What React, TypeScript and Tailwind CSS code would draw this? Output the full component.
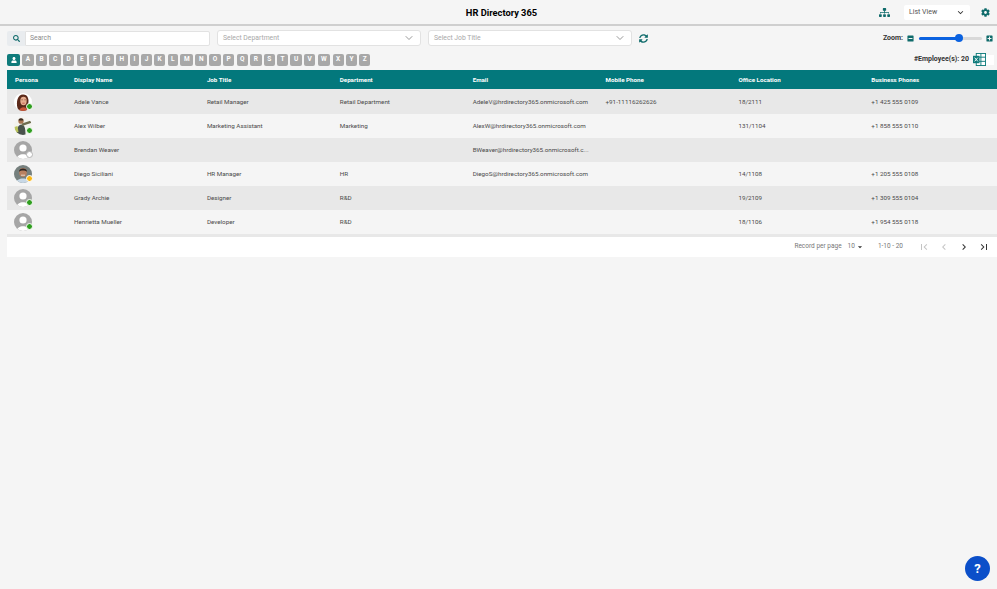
import { ChevronDown } from "lucide-react"
import { FaCog, FaMinusSquare, FaPlusSquare, FaSearch, FaSitemap, FaSyncAlt, FaUser } from "react-icons/fa"
import { MdChevronLeft, MdChevronRight, MdFirstPage, MdLastPage, MdKeyboardArrowDown, MdArrowDropDown } from "react-icons/md"

interface Person {
  name: string
  title: string
  dept: string
  email: string
  mobile: string
  office: string
  phone: string
  photo: "adele" | "alex" | "diego" | "none"
  status: "green" | "yellow" | "off"
}

const people: Person[] = [
  { name: "Adele Vance", title: "Retail Manager", dept: "Retail Department", email: "AdeleV@hrdirectory365.onmicrosoft.com", mobile: "+91-11116262626", office: "18/2111", phone: "+1 425 555 0109", photo: "adele", status: "green" },
  { name: "Alex Wilber", title: "Marketing Assistant", dept: "Marketing", email: "AlexW@hrdirectory365.onmicrosoft.com", mobile: "", office: "131/1104", phone: "+1 858 555 0110", photo: "alex", status: "green" },
  { name: "Brendan Weaver", title: "", dept: "", email: "BWeaver@hrdirectory365.onmicrosoft.c...", mobile: "", office: "", phone: "", photo: "none", status: "off" },
  { name: "Diego Siciliani", title: "HR Manager", dept: "HR", email: "DiegoS@hrdirectory365.onmicrosoft.com", mobile: "", office: "14/1108", phone: "+1 205 555 0108", photo: "diego", status: "yellow" },
  { name: "Grady Archie", title: "Designer", dept: "R&D", email: "", mobile: "", office: "19/2109", phone: "+1 309 555 0104", photo: "none", status: "green" },
  { name: "Henrietta Mueller", title: "Developer", dept: "R&D", email: "", mobile: "", office: "18/1106", phone: "+1 954 555 0118", photo: "none", status: "green" },
]

const columns = ["Persona", "Display Name", "Job Title", "Department", "Email", "Mobile Phone", "Office Location", "Business Phones"]
const letters = "ABCDEFGHIJKLMNOPQRSTUVWXYZ".split("")

function Photo({ kind }: { kind: Person["photo"] }) {
  if (kind === "adele") {
    return (
      <svg viewBox="0 0 18 18" className="w-[18px] h-[18px] rounded-full">
        <rect width="18" height="18" fill="#fff" />
        <path d="M3.500 15C2 9 3.500 1.500 9 1.500c5 0 6.500 5 5 10l-1.500 6.500H5z" fill="#5c2a1a" />
        <ellipse cx="9.500" cy="8" rx="3.200" ry="4.200" fill="#e6ad8f" />
        <path d="M7.500 6.800h1.200M10.500 6.800h1.200" stroke="#4a2418" strokeWidth="0.600" />
        <path d="M8.300 10.200h2.400" stroke="#b8403a" strokeWidth="0.700" />
        <path d="M5 18c1-5 8-5 9 0z" fill="#c9583a" />
      </svg>
    )
  }
  if (kind === "alex") {
    return (
      <svg viewBox="0 0 18 18" className="w-[18px] h-[18px] rounded-full">
        <rect width="18" height="18" fill="#f3f3ee" />
        <circle cx="7" cy="4.200" r="2.600" fill="#a87452" />
        <path d="M4.500 3.500c0-3 5-3 5 0z" fill="#3d2c20" />
        <path d="M2.500 18c0-7 2-10.500 5-10.500s4 3.500 4 10.500z" fill="#49524c" />
        <path d="M8 6.500l9-3v2.500l-9 3z" fill="#6f6d50" />
        <path d="M0.500 10l3-1 1 6-3 1z" fill="#b8c25a" />
      </svg>
    )
  }
  if (kind === "diego") {
    return (
      <svg viewBox="0 0 18 18" className="w-[18px] h-[18px] rounded-full">
        <rect width="18" height="18" fill="#76807e" />
        <ellipse cx="9" cy="7.500" rx="3.800" ry="4.400" fill="#b9805f" />
        <path d="M5 6.800C5 2.500 13 2.500 13 6.800 11 5 7 5 5 6.800z" fill="#2e2622" />
        <path d="M7 10.200h4" stroke="#f2ede6" strokeWidth="0.800" />
        <path d="M1.500 18c1-6 14-6 15 0z" fill="#c8d8e6" />
      </svg>
    )
  }
  return (
    <svg viewBox="0 0 18 18" className="w-[18px] h-[18px] rounded-full">
      <rect width="18" height="18" fill="#a6a6a6" />
      <circle cx="9" cy="7" r="3.600" fill="#fff" />
      <path d="M2.500 18C3 11.500 15 11.500 15.500 18z" fill="#fff" />
    </svg>
  )
}

function Avatar({ person }: { person: Person }) {
  const dot =
    person.status === "green"
      ? "bg-[#2f9e1f] border-white"
      : person.status === "yellow"
        ? "bg-[#fbb714] border-white"
        : "bg-white border-[#b5b5b5]"
  return (
    <div className="relative w-[18px] h-[18px]">
      <Photo kind={person.photo} />
      <span className={`absolute -right-[1px] bottom-[1px] w-[7px] h-[7px] rounded-full border ${dot}`} />
    </div>
  )
}

function ExcelIcon() {
  return (
    <svg viewBox="0 0 14 14" className="w-[13px] h-[13px]">
      <rect x="3.500" y="0.500" width="10" height="13" fill="#fff" stroke="#0f7b7b" />
      <path d="M3.500 4.500h10M3.500 9h10M8.500 0.500v13" stroke="#0f7b7b" fill="none" />
      <rect x="0" y="3" width="7" height="8" fill="#0f7b7b" />
      <path d="M1.800 5l3.400 4M5.200 5L1.800 9" stroke="#fff" strokeWidth="1" />
    </svg>
  )
}

function Cell({ children }: { children: string }) {
  return <div className="pt-[1px]">{children}</div>
}

export default function App() {
  return (
    <div className="w-[997px] h-[589px] bg-[#f5f5f5] overflow-hidden relative text-[#4a4a4a] font-['Roboto','Liberation_Sans',sans-serif]">
      {/* title bar */}
      <header className="h-[26px] border-b-2 border-[#cfcfcf] flex items-center relative">
        <h1 className="flex-1 text-center text-[9.300px] font-bold text-black pl-[6px] pt-[1px]">HR Directory 365</h1>
        <div className="absolute right-[7px] top-[5px] flex items-center">
          <FaSitemap className="text-[#0f6b6b] text-[11px] mr-[14px]" />
          <div className="w-[66px] h-[15px] bg-white rounded-[2px] flex items-center justify-between pl-[5px] pr-[4px] text-[7px] text-[#555] mr-[11px]">
            <span>List View</span>
            <MdKeyboardArrowDown className="text-[11px] text-[#333]" />
          </div>
          <FaCog className="text-[#0f6b6b] text-[9px]" />
        </div>
      </header>

      {/* filters */}
      <div className="flex items-center h-[16px] mt-[4px] pl-[7px] pr-[4px]">
        <div className="w-[18px] h-[15px] bg-[#e9ecef] rounded-l-[2px] flex items-center justify-center">
          <FaSearch className="text-[#0f6b6b] text-[7px]" />
        </div>
        <div className="w-[185px] h-[15px] bg-white border border-[#e2e2e2] rounded-r-[2px] flex items-center pl-[4px] text-[6.800px] text-[#8a8a8a]">Search</div>
        <div className="ml-[7px] w-[204px] h-[16px] bg-white border border-[#e2e2e2] rounded-[3px] flex items-center justify-between pl-[5px] pr-[5px] text-[6.800px] text-[#a8a8a8]">
          <span>Select Department</span>
          <ChevronDown size={12} strokeWidth={1.500} className="text-[#777]" />
        </div>
        <div className="ml-[7px] w-[204px] h-[16px] bg-white border border-[#e2e2e2] rounded-[3px] flex items-center justify-between pl-[5px] pr-[5px] text-[6.800px] text-[#a8a8a8]">
          <span>Select Job Title</span>
          <ChevronDown size={12} strokeWidth={1.500} className="text-[#777]" />
        </div>
        <FaSyncAlt className="ml-[7px] text-[#0f6b6b] text-[9px]" />
        <div className="ml-auto flex items-center">
          <span className="text-[7px] font-bold text-[#333] mr-[4px]">Zoom:</span>
          <FaMinusSquare className="text-[#0f6b6b] text-[7px]" />
          <div className="relative w-[63px] h-[3px] rounded-full bg-[#d9d9d9] ml-[5px] mr-[4px]">
            <div className="w-[40px] h-[3px] rounded-full bg-[#0b62e0]" />
            <span className="absolute left-[36px] -top-[2.500px] w-[8px] h-[8px] rounded-full bg-[#0b62e0]" />
          </div>
          <FaPlusSquare className="text-[#0f6b6b] text-[7px]" />
        </div>
      </div>

      {/* alphabet */}
      <div className="flex items-center mt-[7px] pl-[7px] pr-[3px] h-[13px]">
        <div className="flex gap-[2.300px]">
          <div className="w-[13px] h-[12px] rounded-[2px] bg-[#0f7b7b] flex items-center justify-center">
            <FaUser className="text-white text-[6px]" />
          </div>
          {letters.map((l) => (
            <div key={l} className="px-[3.500px] h-[12px] rounded-[2px] bg-[#a8a8a8] flex items-center justify-center text-[6.500px] font-bold text-white">
              {l}
            </div>
          ))}
        </div>
        <div className="ml-auto flex items-center">
          <span className="text-[7px] font-bold text-[#333] mr-[4px]">#Employee(s): 20</span>
          <ExcelIcon />
          <span className="w-[8px] h-[10px] bg-white" />
        </div>
      </div>

      {/* table */}
      <div className="ml-[7px] mt-[4px]">
        <div className="grid grid-cols-[67px_repeat(6,132.900px)_1fr] h-[20px] items-center bg-[#03787c] border-b border-[#e8e8e8] text-white text-[6.200px] font-bold">
          {columns.map((c, i) => (
            <div key={c} className={i === 0 ? "pl-[8px] pt-[3px]" : "pt-[3px]"}>{c}</div>
          ))}
        </div>
        {people.map((p, idx) => (
          <div key={p.name} className={`grid grid-cols-[67px_repeat(6,132.900px)_1fr] h-[24px] items-center text-[6.250px] ${idx % 2 === 0 ? "bg-[#e8e8e8]" : "bg-[#f5f5f5]"}`}>
            <div className="pl-[7px]"><Avatar person={p} /></div>
            <Cell>{p.name}</Cell>
            <Cell>{p.title}</Cell>
            <Cell>{p.dept}</Cell>
            <Cell>{p.email}</Cell>
            <Cell>{p.mobile}</Cell>
            <Cell>{p.office}</Cell>
            <Cell>{p.phone}</Cell>
          </div>
        ))}
        <div className="h-[3px] bg-[#e8e8e8]" />
        <div className="h-[20px] bg-white flex items-center justify-end text-[6.500px] text-[#777] pr-[7px]">
          <span>Record per page</span>
          <span className="ml-[6px]">10</span>
          <MdArrowDropDown className="text-[10px] text-[#333]" />
          <span className="ml-[13px] mr-[15px]">1-10 - 20</span>
          <MdFirstPage className="text-[12px] text-[#c4c4c4] mr-[8px]" />
          <MdChevronLeft className="text-[12px] text-[#c4c4c4] mr-[8px]" />
          <MdChevronRight className="text-[12px] text-[#333] mr-[8px]" />
          <MdLastPage className="text-[12px] text-[#333]" />
        </div>
      </div>

      {/* help */}
      <button className="absolute left-[965px] top-[556px] w-[25px] h-[25px] rounded-full bg-[#0b4fc9] text-white text-[13px] font-bold flex items-center justify-center">?</button>
    </div>
  )
}
